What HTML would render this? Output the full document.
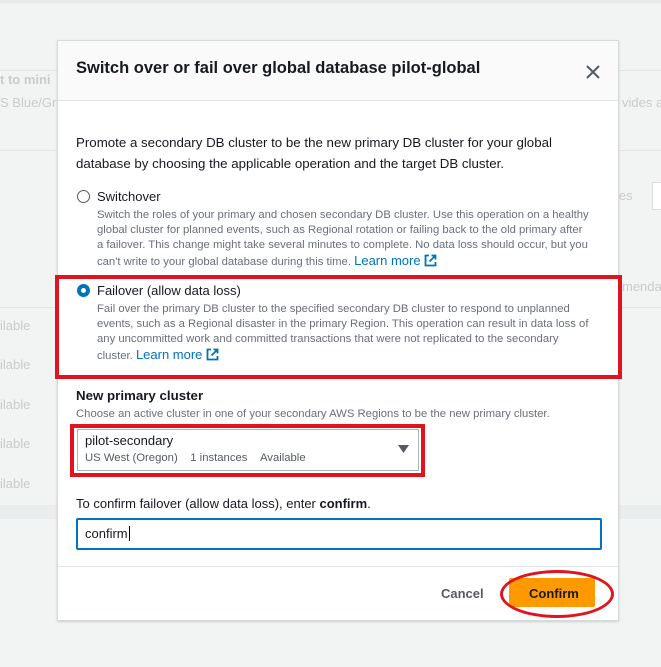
<!DOCTYPE html>
<html><head><meta charset="utf-8"><style>
*{margin:0;padding:0;box-sizing:border-box}
body{width:661px;height:667px;background:#f2f3f3;font-family:"Liberation Sans",sans-serif;position:relative;overflow:hidden;color:#16191f}
.a{position:absolute;white-space:nowrap}
.bg{color:#c9cccc;font-size:13px}
.modal{position:absolute;left:57px;top:40px;width:562px;height:581px;background:#fff;border:1px solid #d5dbdb;box-shadow:0 1px 2px rgba(0,0,0,.15)}
.hd{position:absolute;left:0;top:0;width:100%;height:60px;background:#fafafa;border-bottom:1px solid #e3e6e6}
.d{font-size:11.3px;color:#687078;line-height:15px}
.lm{color:#0073bb;font-size:13px}
.ext{display:inline-block;vertical-align:-2px}
</style></head><body>
<div style="position:absolute;left:0;top:0;width:661px;height:3px;background:#e6eaea"></div>
<div style="position:absolute;left:0;top:70px;width:661px;height:1px;background:#e3e6e6"></div>
<div style="position:absolute;left:0;top:150px;width:661px;height:1px;background:#e3e6e6"></div>
<div style="position:absolute;left:0;top:307px;width:661px;height:1px;background:#e3e6e6"></div>
<div style="position:absolute;left:0;top:505px;width:661px;height:14px;background:#eaeded"></div>
<div class="a bg" style="left:0;top:72px;font-weight:bold">t to mini</div>
<div class="a bg" style="left:0;top:95px">S Blue/Gre</div>
<div class="a bg" style="left:622px;top:95px">vides a</div>
<div class="a bg" style="left:608px;top:188px">rces</div>
<div style="position:absolute;left:652px;top:182px;width:20px;height:28px;border:1px solid #ddd;background:#fff"></div>
<div class="a bg" style="left:622px;top:279px">menda</div>
<div class="a bg" style="left:0;top:318px">ilable</div>
<div class="a bg" style="left:0;top:357px">ilable</div>
<div class="a bg" style="left:0;top:397px">ilable</div>
<div class="a bg" style="left:0;top:436px">ilable</div>
<div class="a bg" style="left:0;top:476px">ilable</div>

<div class="modal">
<div class="hd"></div>
<div class="a" style="left:18px;top:18px;font-size:16.5px;font-weight:bold;color:#16191f">Switch over or fail over global database pilot-global</div>
<svg class="a" style="left:528px;top:24px" width="14" height="14" viewBox="0 0 14 14"><path d="M1 1L13 13M13 1L1 13" stroke="#545b64" stroke-width="2"/></svg>
<div class="a" style="left:18px;top:92px;font-size:13.3px;line-height:20.5px;color:#16191f">Promote a secondary DB cluster to be the new primary DB cluster for your global<br>database by choosing the applicable operation and the target DB cluster.</div>
<div class="a" style="left:19px;top:149px;width:13px;height:13px;border:1.3px solid #545b64;border-radius:50%"></div>
<div class="a" style="left:39px;top:148px;font-size:13px">Switchover</div>
<div class="a d" style="left:39px;top:167px">Switch the roles of your primary and chosen secondary DB cluster. Use this operation on a healthy<br>global cluster for planned events, such as Regional rotation or failing back to the old primary after<br>a failover. This change might take several minutes to complete. No data loss should occur, but you<br>can't write to your global database during this time. <span class="lm">Learn more <svg class="ext" width="13" height="13" viewBox="0 0 13 13"><path d="M5 1.5H1.5V11.5H11.5V8M7.5 1.5H11.5V5.5M11.5 1.5L5.5 7.5" fill="none" stroke="#0073bb" stroke-width="1.8"/></svg></span></div>

<div class="a" style="left:19px;top:243px;width:13px;height:13px;border:4px solid #0073bb;border-radius:50%"></div>
<div class="a" style="left:39px;top:242px;font-size:13px">Failover (allow data loss)</div>
<div class="a d" style="left:39px;top:261px">Fail over the primary DB cluster to the specified secondary DB cluster to respond to unplanned<br>events, such as a Regional disaster in the primary Region. This operation can result in data loss of<br>any uncommitted work and committed transactions that were not replicated to the secondary<br>cluster. <span class="lm">Learn more <svg class="ext" width="13" height="13" viewBox="0 0 13 13"><path d="M5 1.5H1.5V11.5H11.5V8M7.5 1.5H11.5V5.5M11.5 1.5L5.5 7.5" fill="none" stroke="#0073bb" stroke-width="1.8"/></svg></span></div>

<div class="a" style="left:18px;top:347px;font-size:13.3px;font-weight:bold">New primary cluster</div>
<div class="a" style="left:18px;top:367px;font-size:11.3px;color:#687078">Choose an active cluster in one of your secondary AWS Regions to be the new primary cluster.</div>
<div class="a" style="left:19px;top:388px;width:342px;height:42px;border:1px solid #aab7b8;background:#fff"></div>
<div class="a" style="left:27px;top:392px;font-size:13px">pilot-secondary</div>
<div class="a" style="left:27px;top:411px;font-size:11.3px;color:#545b64">US West (Oregon)&nbsp;&nbsp;&nbsp; 1 instances &nbsp;&nbsp;&nbsp;Available</div>
<svg class="a" style="left:340px;top:404px" width="11" height="8" viewBox="0 0 11 8"><path d="M0 0H11L5.5 8Z" fill="#545b64"/></svg>

<div class="a" style="left:18px;top:455px;font-size:13px">To confirm failover (allow data loss), enter <b>confirm</b>.</div>
<div class="a" style="left:18px;top:477px;width:526px;height:32px;border:2px solid #0073bb;border-radius:2px"></div>
<div class="a" style="left:27px;top:485px;font-size:13px">confirm<span style="border-left:1px solid #000;margin-left:1px"></span></div>
<div class="a" style="left:0;top:525px;width:100%;height:1px;background:#e3e6e6"></div>
<div class="a" style="left:383px;top:545px;font-size:13px;font-weight:bold;color:#545b64">Cancel</div>
<div class="a" style="left:451px;top:537px;width:86px;height:29px;background:#ff9900;border-radius:2px"></div>
<div class="a" style="left:471px;top:545px;font-size:13px;font-weight:bold;color:#16191f">Confirm</div>
</div>

<div class="a" style="left:55px;top:275px;width:567px;height:104px;border:4px solid #e0141e"></div>
<div class="a" style="left:70px;top:424px;width:355px;height:53px;border:4px solid #e0141e"></div>
<div class="a" style="left:500px;top:570px;width:114px;height:48px;border:3.5px solid #e0141e;border-radius:50%"></div>
</body></html>
